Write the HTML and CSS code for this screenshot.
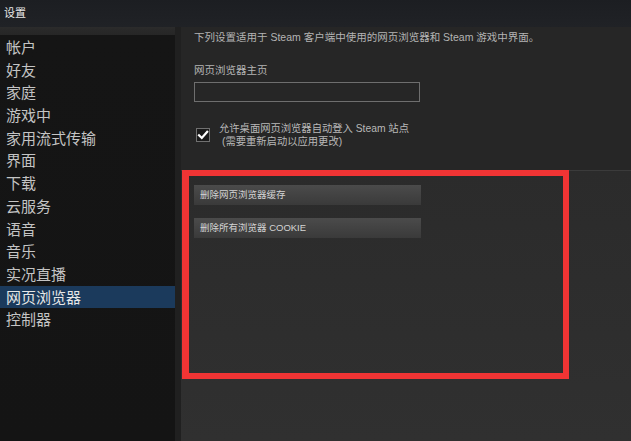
FILE: index.html
```html
<!DOCTYPE html>
<html lang="zh-CN">
<head>
<meta charset="utf-8">
<title>设置</title>
<link rel="stylesheet" href="styles.css">
</head>
<body>
<div class="window">
  <header class="titlebar">设置</header>
  <div class="main">
    <nav class="sidebar">
      <div class="nav-item">帐户</div>
      <div class="nav-item">好友</div>
      <div class="nav-item">家庭</div>
      <div class="nav-item">游戏中</div>
      <div class="nav-item">家用流式传输</div>
      <div class="nav-item">界面</div>
      <div class="nav-item">下载</div>
      <div class="nav-item">云服务</div>
      <div class="nav-item">语音</div>
      <div class="nav-item">音乐</div>
      <div class="nav-item">实况直播</div>
      <div class="nav-item active">网页浏览器</div>
      <div class="nav-item">控制器</div>
    </nav>
    <section class="content">
      <div class="top-section">
        <p class="intro">下列设置适用于 Steam 客户端中使用的网页浏览器和 Steam 游戏中界面。</p>
        <div class="field-label">网页浏览器主页</div>
        <div class="text-input"></div>
        <div class="check-row">
          <span class="checkbox">
            <svg width="12" height="12" viewBox="0 0 12 12"><path d="M2 6.2 L4.8 9 L10.2 2.8" fill="none" stroke="#ffffff" stroke-width="2.2" stroke-linecap="square"/></svg>
          </span>
          <div class="check-label">
            <div>允许桌面网页浏览器自动登入 Steam 站点</div>
            <div class="sub">(需要重新启动以应用更改)</div>
          </div>
        </div>
      </div>
      <div class="bottom-section">
        <div class="btn">删除网页浏览器缓存</div>
        <div class="btn">删除所有浏览器 COOKIE</div>
        <div class="highlight-box"></div>
      </div>
    </section>
  </div>
</div>
</body>
</html>
```
FILE: styles.css
```css
html, body {
  margin: 0;
  padding: 0;
  background: #2a2a2a;
}
.window {
  width: 631px;
  height: 441px;
  overflow: hidden;
  display: flex;
  flex-direction: column;
  font-family: "Liberation Sans", "Noto Sans CJK SC", sans-serif;
}
.titlebar {
  height: 27px;
  flex: none;
  box-sizing: border-box;
  padding: 5px 0 0 4px;
  font-size: 11px;
  line-height: 14px;
  color: #e8e8e8;
  background: linear-gradient(#1c1e22, #202226);
  font-family: "Noto Sans CJK SC", sans-serif;
}
.main {
  flex: 1;
  display: flex;
  min-height: 0;
}
.sidebar {
  width: 175px;
  flex: none;
  box-sizing: border-box;
  padding-top: 9px;
  background: linear-gradient(#2b2b2b 0, #262626 8px, #151515 8px, #141414 100%);
}
.nav-item {
  height: 22.7px;
  line-height: 22.7px;
  padding-left: 6px;
  font-size: 15px;
  color: #c4c4c4;
  font-family: "Noto Sans CJK SC", sans-serif;
}
.nav-item.active {
  background: #1b3a5c;
  color: #e6e6e6;
}
.content {
  flex: 1;
  display: flex;
  flex-direction: column;
  background: #262626;
  border-left: 6px solid #202020;
}
.top-section {
  height: 143px;
  flex: none;
  box-sizing: border-box;
  padding: 3px 0 0 13px;
  font-family: "Liberation Sans", "Noto Sans CJK SC", sans-serif;
  color: #b4b4b4;
  font-size: 10.5px;
}
.intro {
  margin: 0;
  line-height: 14px;
}
.field-label {
  margin-top: 19px;
  line-height: 14px;
}
.text-input {
  margin-top: 5px;
  width: 226px;
  height: 20px;
  box-sizing: border-box;
  border: 1px solid #6e6e6e;
  background: #262626;
}
.check-row {
  margin-top: 21px;
  display: flex;
  align-items: flex-start;
}
.checkbox {
  margin: 5px 0 0 2px;
  width: 14px;
  height: 14px;
  box-sizing: border-box;
  border: 1px solid #707070;
  background: #1a1a1a;
  display: flex;
  align-items: center;
  justify-content: center;
  flex: none;
}
.check-label {
  margin-left: 9px;
  line-height: 12.5px;
  font-size: 10.3px;
  color: #b8b8b8;
}
.check-label .sub {
  padding-left: 3px;
}
.bottom-section {
  flex: 1;
  position: relative;
  border-top: 1px solid #3b3b3b;
  background: linear-gradient(#2b2b2b, #303030);
  padding: 14px 0 0 13px;
  display: flex;
  flex-direction: column;
  gap: 13px;
}
.btn {
  width: 227px;
  height: 20px;
  box-sizing: border-box;
  padding-left: 6px;
  line-height: 20px;
  font-size: 9.5px;
  color: #d4d4d4;
  font-family: "Liberation Sans", "Noto Sans CJK SC", sans-serif;
  background: linear-gradient(#4b4b4b, #3a3a3a);
}
.highlight-box {
  position: absolute;
  left: 1px;
  top: -1px;
  width: 387px;
  height: 209px;
  box-sizing: border-box;
  border: 6px solid #f03434;
  border-left-width: 7px;
}
```
